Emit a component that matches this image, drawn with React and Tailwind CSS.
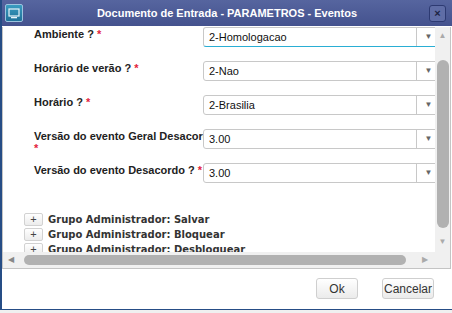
import React from 'react';

const fields = [
  { label: 'Ambiente ?', value: '2-Homologacao', focus: true },
  { label: 'Horário de verão ?', value: '2-Nao' },
  { label: 'Horário ?', value: '2-Brasilia' },
  { label: 'Versão do evento Geral Desacordo ?', value: '3.00', wrap: true },
  { label: 'Versão do evento Desacordo ?', value: '3.00' },
];

const groups = ['Salvar', 'Bloquear', 'Desbloquear'];

function Select({ value, focus }) {
  return (
    <div
      className={
        'flex h-[20px] w-[238px] shrink-0 items-center rounded-[3px] border bg-white ' +
        (focus ? 'border-[#c8c8c8] border-b-[#2aaed4]' : 'border-[#c8c8c8]')
      }
    >
      <span className="flex-1 pl-[5px] text-[11px] text-[#111]">{value}</span>
      <span className="flex h-full w-[24px] items-center justify-center border-l border-[#c8c8c8] text-[8px] text-[#666]">
        ▼
      </span>
    </div>
  );
}

export default function App() {
  return (
    <div className="h-[313px] w-[452px] overflow-hidden bg-[#f0f0f0] font-['Liberation_Sans',Arial,sans-serif]">
      <div className="flex h-[310px] flex-col border-b border-l-2 border-[#264d86] bg-white">
        {/* title bar */}
        <div className="relative flex h-[26px] shrink-0 items-center justify-center bg-gradient-to-b from-[#56659f] to-[#44528e]">
          <div className="absolute left-[3px] top-[4px] flex h-[18px] w-[18px] items-center justify-center rounded-[2px] border border-[#9cc3de] bg-gradient-to-b from-[#3a9cc0] to-[#1f7199]">
            <svg width="12" height="11" viewBox="0 0 12 11">
              <rect x="1" y="1" width="10" height="7" fill="none" stroke="#e8f4fa" strokeWidth="1.2" />
              <rect x="3" y="9" width="6" height="1.3" fill="#e8f4fa" />
            </svg>
          </div>
          <span className="text-[11px] font-bold text-white">Documento de Entrada - PARAMETROS - Eventos</span>
          <div className="absolute left-[427px] top-[5px] flex h-[17px] w-[17px] items-center justify-center rounded-[3px] border border-[#2d3a72] bg-[#5f6da6] text-[11px] font-bold leading-none text-[#1c2444]">
            ×
          </div>
        </div>

        {/* scroll area */}
        <div className="mr-[1px] mt-[1px] flex h-[242px] shrink-0 flex-col border-b border-l border-r border-[#c4c4c4]">
          <div className="flex h-[225px]">
            <div className="flex-1 overflow-hidden">
              <div className="flex flex-col gap-[14px]">
                {fields.map((f) => (
                  <div key={f.label} className="flex h-[20px] items-start">
                    <div className="w-[200px] shrink-0 pl-[31px] pt-[1px] text-[11px] font-bold leading-[12px] text-[#222]">
                      {f.wrap ? (
                        <>
                          <div className="whitespace-nowrap">{f.label}</div>
                          <div className="text-[#e3233b]">*</div>
                        </>
                      ) : (
                        <span className="whitespace-nowrap">
                          {f.label} <span className="text-[#e3233b]">*</span>
                        </span>
                      )}
                    </div>
                    <div className="relative z-10 bg-white">
                      <Select value={f.value} focus={f.focus} />
                    </div>
                  </div>
                ))}
              </div>
              <div className="mt-[30px] flex flex-col gap-[2px] pl-[21px]">
                {groups.map((g) => (
                  <div key={g} className="flex h-[13px] shrink-0 items-center gap-[5px]">
                    <span className="flex h-[13px] w-[19px] items-center justify-center rounded-[2px] border border-[#d2d2d2] bg-gradient-to-b from-white to-[#ececec] text-[11px] leading-none text-[#444]">
                      +
                    </span>
                    <span className="whitespace-nowrap font-['DejaVu_Sans',Verdana,sans-serif] text-[10px] font-bold text-[#333]">
                      Grupo Administrador: {g}
                    </span>
                  </div>
                ))}
              </div>
            </div>
            {/* vertical scrollbar */}
            <div className="flex w-[15px] shrink-0 flex-col items-center bg-[#f0f0f0]">
              <span className="mt-[4px] h-[10px] text-[8px] leading-[10px] text-[#aaa]">▲</span>
              <div className="mt-[19px] h-[168px] w-[12px] rounded-full bg-[#b1b1b1]" />
              <span className="mt-[9px] h-[10px] text-[8px] leading-[10px] text-[#aaa]">▼</span>
            </div>
          </div>
          {/* horizontal scrollbar */}
          <div className="flex h-[16px] items-center bg-[#f0f0f0]">
            <span className="ml-[5px] w-[10px] text-[8px] leading-none text-[#888]">◀</span>
            <div className="ml-[6px] h-[10px] w-[382px] rounded-full bg-[#b1b1b1]" />
            <span className="ml-[16px] text-[8px] leading-none text-[#aaa]">▶</span>
          </div>
        </div>

        {/* footer */}
        <div className="flex flex-1 items-start justify-end gap-[24px] pr-[18px] pt-[9px]">
          <button className="h-[21px] w-[42px] rounded-[3px] border border-[#cfcfcf] bg-gradient-to-b from-white to-[#ebebeb] text-[12px] text-[#333]">
            Ok
          </button>
          <button className="h-[21px] w-[52px] rounded-[3px] border border-[#cfcfcf] bg-gradient-to-b from-white to-[#ebebeb] text-[12px] text-[#333]">
            Cancelar
          </button>
        </div>
      </div>
    </div>
  );
}
